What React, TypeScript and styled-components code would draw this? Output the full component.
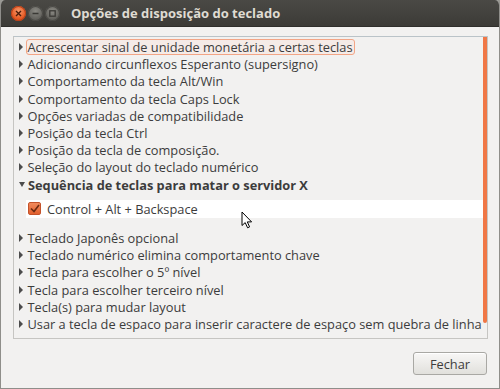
import styled, { createGlobalStyle } from 'styled-components';

const GlobalStyle = createGlobalStyle`
  html, body {
    margin: 0;
    padding: 0;
    background: #9a9994;
  }
  * {
    box-sizing: border-box;
  }
`;

const FONT = `'Open Sans', 'DejaVu Sans', sans-serif`;

// janela principal
const Window = styled.div`
  position: relative;
  width: 500px;
  height: 389px;
  display: flex;
  flex-direction: column;
  background: #f2f1f0;
  border: 1px solid #8f8e8a;
  border-top: none;
  border-radius: 5px 5px 0 0;
  overflow: hidden;
  font-family: ${FONT};
`;

const TitleBar = styled.div`
  height: 27px;
  flex-shrink: 0;
  display: flex;
  align-items: center;
  padding-left: 10px;
  background: linear-gradient(#4a4945, #3c3b37);
  border-bottom: 1px solid #2f2e2b;
`;

const WindowButtons = styled.div`
  display: flex;
  gap: 2px;
  margin-right: 11px;
`;

const RoundButton = styled.div<{ $close?: boolean }>`
  width: 15px;
  height: 15px;
  border-radius: 50%;
  display: flex;
  align-items: center;
  justify-content: center;
  background: ${(p) =>
    p.$close
      ? 'radial-gradient(circle at 50% 35%, #f79a6c, #e55a24 60%, #c9441a)'
      : 'radial-gradient(circle at 50% 35%, #8a8983, #65645f 60%, #55544f)'};
  box-shadow: inset 0 0 0 1px ${(p) => (p.$close ? '#b8411a' : '#4a4945')};
`;

const Title = styled.span`
  color: #dfdbd2;
  font-size: 13px;
  font-weight: 700;
`;

const Body = styled.div`
  flex: 1;
  display: flex;
  flex-direction: column;
  padding: 9px 11px 0 12px;
`;

const ListFrame = styled.div`
  position: relative;
  height: 303px;
  border: 1px solid #c6c5c2;
  border-top-color: #bac3c8;
  padding-top: 1.5px;
  overflow: hidden;
`;

const Thumb = styled.div`
  position: absolute;
  right: 0;
  top: 0;
  width: 4px;
  height: 286px;
  background: #f07746;
  border-radius: 0 0 2px 2px;
`;

const Row = styled.div`
  height: 17.2px;
  display: flex;
  align-items: center;
  padding-left: 5px;
  color: #3c3c3c;
  font-size: 12.8px;
  white-space: nowrap;
`;

const Expander = styled.span<{ $open?: boolean }>`
  width: 0;
  height: 0;
  margin-right: ${(p) => (p.$open ? '2px' : '3.5px')};
  border-style: solid;
  border-color: transparent;
  ${(p) =>
    p.$open
      ? 'border-width: 5px 3.5px 0 3.5px; border-top-color: #4c4c4c;'
      : 'border-width: 4px 0 4px 4.5px; border-left-color: #4c4c4c;'}
`;

const Label = styled.span<{ $focus?: boolean; $bold?: boolean }>`
  font-weight: ${(p) => (p.$bold ? 700 : 400)};
  height: 16px;
  line-height: 15px;
  padding: 0 1px;
  border-radius: 3px;
  border: 1px solid ${(p) => (p.$focus ? '#f2a586' : 'transparent')};
  background: ${(p) => (p.$focus ? '#f5ebe7' : 'transparent')};
  margin-left: -1px;
`;

const CheckRow = styled.div`
  height: 18px;
  margin: 6.7px 4px 11.5px 12px;
  background: #ffffff;
  display: flex;
  align-items: center;
  padding-left: 2px;
  color: #3c3c3c;
  font-size: 12.8px;
`;

const CheckBox = styled.span`
  width: 13px;
  height: 13px;
  margin-right: 6px;
  border-radius: 2px;
  background: linear-gradient(#f08a5c, #e2602e);
  border: 1px solid #c4522a;
  display: flex;
  align-items: center;
  justify-content: center;
`;

const Footer = styled.div`
  display: flex;
  justify-content: flex-end;
  padding: 13px 1px 0 0;
`;

const Button = styled.button`
  width: 74px;
  height: 23px;
  font-family: ${FONT};
  font-size: 12.8px;
  color: #3c3c3c;
  border: 1px solid #a9a8a4;
  border-radius: 3px;
  background: linear-gradient(#f8f7f6, #e1e0dc);
  box-shadow: inset 0 1px 0 #ffffff;
  padding: 0;
`;

const Cursor = styled.svg`
  position: absolute;
  left: 240px;
  top: 211px;
`;

const before = [
  'Acrescentar sinal de unidade monetária a certas teclas',
  'Adicionando circunflexos Esperanto (supersigno)',
  'Comportamento da tecla Alt/Win',
  'Comportamento da tecla Caps Lock',
  'Opções variadas de compatibilidade',
  'Posição da tecla Ctrl',
  'Posição da tecla de composição.',
  'Seleção do layout do teclado numérico',
];

const after = [
  'Teclado Japonês opcional',
  'Teclado numérico elimina comportamento chave',
  'Tecla para escolher o 5º nível',
  'Tecla para escolher terceiro nível',
  'Tecla(s) para mudar layout',
  'Usar a tecla de espaco para inserir caractere de espaço sem quebra de linha',
];

function App() {
  return (
    <>
      <GlobalStyle />
      <Window>
        <TitleBar>
          <WindowButtons>
            <RoundButton $close>
              <svg width="7" height="7" viewBox="0 0 7 7">
                <path d="M1 1L6 6M6 1L1 6" stroke="#4a1c0a" strokeWidth="1.4" />
              </svg>
            </RoundButton>
            <RoundButton>
              <svg width="7" height="7" viewBox="0 0 7 7">
                <path d="M0.5 3.5H6.5" stroke="#3a3935" strokeWidth="1.6" />
              </svg>
            </RoundButton>
            <RoundButton>
              <svg width="7" height="7" viewBox="0 0 7 7">
                <rect x="0.8" y="0.8" width="5.4" height="5.4" fill="none" stroke="#3a3935" strokeWidth="1.3" />
              </svg>
            </RoundButton>
          </WindowButtons>
          <Title>Opções de disposição do teclado</Title>
        </TitleBar>
        <Body>
          <ListFrame>
            {before.map((t, i) => (
              <Row key={t}>
                <Expander />
                <Label $focus={i === 0}>{t}</Label>
              </Row>
            ))}
            <Row>
              <Expander $open />
              <Label $bold>Sequência de teclas para matar o servidor X</Label>
            </Row>
            <CheckRow>
              <CheckBox>
                <svg width="10" height="9" viewBox="0 0 10 9">
                  <path d="M1 4.5L4 7.5L9 1" fill="none" stroke="#6a2a12" strokeWidth="1.6" />
                </svg>
              </CheckBox>
              Control + Alt + Backspace
            </CheckRow>
            {after.map((t) => (
              <Row key={t}>
                <Expander />
                <Label>{t}</Label>
              </Row>
            ))}
            <Thumb />
          </ListFrame>
          <Footer>
            <Button>Fechar</Button>
          </Footer>
        </Body>
        <Cursor width="12" height="18" viewBox="0 0 12 18">
          <path
            d="M1 1L1 14.5L4.2 11.6L6.6 16.8L8.6 15.9L6.3 10.9L10.6 10.9Z"
            fill="#ffffff"
            stroke="#000000"
            strokeWidth="1"
            strokeLinejoin="round"
          />
        </Cursor>
      </Window>
    </>
  );
}

export default App;
